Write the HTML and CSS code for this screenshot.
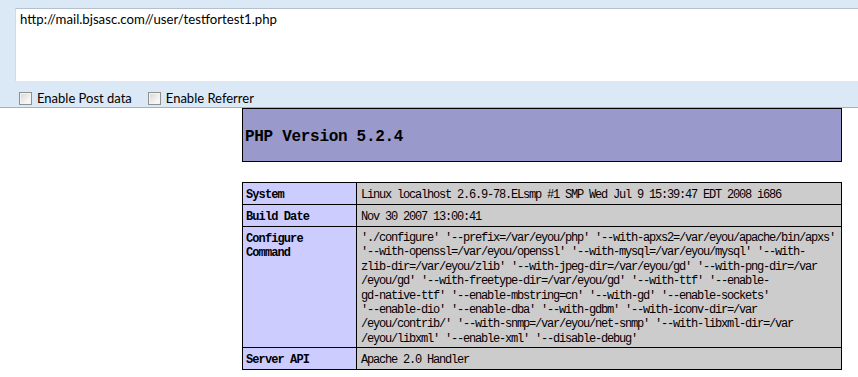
FILE: index.html
```html
<!DOCTYPE html>
<html lang="en">
<head>
    <meta charset="UTF-8">
    <title>phpinfo()</title>
    <link rel="stylesheet" href="styles.css">
</head>
<body>
    <div class="toolbar">
        <textarea class="url" spellcheck="false">http://mail.bjsasc.com//user/testfortest1.php</textarea>
        <div class="options">
            <label class="opt"><input type="checkbox"> Enable Post data</label>
            <label class="opt"><input type="checkbox"> Enable Referrer</label>
        </div>
    </div>

    <div class="phpinfo">
        <div class="head">
            <h1>PHP Version 5.2.4</h1>
        </div>

        <table class="info">
            <tr>
                <td class="e">System</td>
                <td class="v">Linux localhost 2.6.9-78.ELsmp #1 SMP Wed Jul 9 15:39:47 EDT 2008 i686</td>
            </tr>
            <tr>
                <td class="e">Build Date</td>
                <td class="v">Nov 30 2007 13:00:41</td>
            </tr>
            <tr>
                <td class="e">Configure<br>Command</td>
                <td class="v code">'./configure' '--prefix=/var/eyou/php' '--with-apxs2=/var/eyou/apache/bin/apxs'<br>'--with-openssl=/var/eyou/openssl' '--with-mysql=/var/eyou/mysql' '--with-<br>zlib-dir=/var/eyou/zlib' '--with-jpeg-dir=/var/eyou/gd' '--with-png-dir=/var<br>/eyou/gd' '--with-freetype-dir=/var/eyou/gd' '--with-ttf' '--enable-<br>gd-native-ttf' '--enable-mbstring=cn' '--with-gd' '--enable-sockets'<br>'--enable-dio' '--enable-dba' '--with-gdbm' '--with-iconv-dir=/var<br>/eyou/contrib/' '--with-snmp=/var/eyou/net-snmp' '--with-libxml-dir=/var<br>/eyou/libxml' '--enable-xml' '--disable-debug'</td>
            </tr>
            <tr>
                <td class="e">Server API</td>
                <td class="v">Apache 2.0 Handler</td>
            </tr>
        </table>
    </div>
</body>
</html>
```

FILE: styles.css
```css
:root {
    --panel: #dbe8f6;
    --panel-line: #a9b0b8;
    --head: #9999cc;
    --label: #ccccff;
    --value: #cccccc;
}

body {
    margin: 0;
    background: #fff;
    color: #000;
    overflow: hidden;
}

/* request bar */
.toolbar {
    background: var(--panel);
    border-bottom: 1px solid var(--panel-line);
    padding: 8px 0 0 15px;
    box-sizing: border-box;
    height: 108px;
    font-family: Lato, "Noto Sans", sans-serif;
    font-size: 13px;
}

.url {
    display: block;
    width: 100%;
    height: 73px;
    box-sizing: border-box;
    margin: 0;
    padding: 2px 4px;
    border: none;
    border-top: 1px solid #b5c0cc;
    border-left: 1px solid #d0dbe6;
    background: #fff;
    font: inherit;
    font-size: 13.2px;
    color: #000;
    resize: none;
    outline: none;
}

.options {
    display: flex;
    gap: 16px;
    padding: 9px 0 0 4px;
}

.opt {
    display: flex;
    align-items: center;
    gap: 5px;
    color: #000;
}

.opt input {
    appearance: none;
    -webkit-appearance: none;
    width: 13px;
    height: 13px;
    margin: 0;
    border: 1px solid #8e8f8f;
    background: linear-gradient(135deg, #d5d6d8 0%, #f4f4f4 70%, #fff 100%);
    box-shadow: inset 0 0 0 1px #f4f4f4;
}

/* phpinfo */
.phpinfo {
    width: 600px;
    margin-left: 242px;
    font-family: "Liberation Mono", monospace;
}

.head {
    background: var(--head);
    border: 1px solid #000;
    height: 54px;
    box-sizing: border-box;
    display: flex;
    align-items: center;
    padding: 3px 0 0 2px;
}

.head h1 {
    margin: 0;
    font-size: 16px;
    letter-spacing: -0.3px;
    font-weight: bold;
}

.info {
    margin-top: 20px;
    width: 600px;
    border-collapse: collapse;
    font-size: 12px;
    letter-spacing: -1.2px;
}

.info td {
    border: 1px solid #000;
    padding: 5px 4px 2px;
    line-height: 14px;
    vertical-align: top;
}

.info .e {
    width: 106px;
    background: var(--label);
    font-weight: bold;
    padding-left: 3px;
    letter-spacing: -0.9px;
}

.info .v {
    background: var(--value);
}

.info .code {
    white-space: nowrap;
    line-height: 14.4px;
    padding-top: 4px;
    padding-bottom: 1px;
}
```
